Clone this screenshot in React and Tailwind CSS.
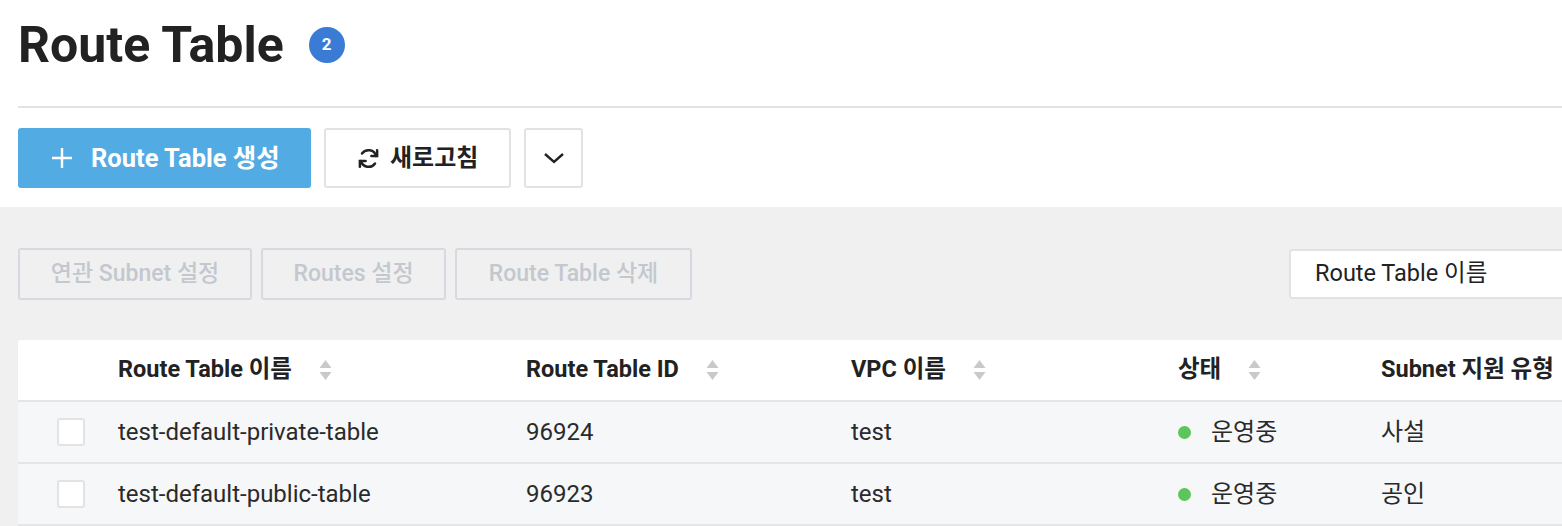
import React from "react";

const font = { fontFamily: "Roboto, 'Noto Sans CJK KR', sans-serif" };

const rows = [
  { id: 1, name: "test-default-private-table", tableId: "96924", vpc: "test", status: "운영중", type: "사설" },
  { id: 2, name: "test-default-public-table", tableId: "96923", vpc: "test", status: "운영중", type: "공인" },
];

const grid = "grid grid-cols-[100px_408px_325px_327px_203px_1fr]";

function SortIcon() {
  return (
    <svg width="13" height="22" viewBox="0 0 13 22" className="ml-[27px] shrink-0">
      <path d="M6.5 1 L12.5 9 H0.5 Z" fill="#c9c9c9" />
      <path d="M6.5 21 L12.5 13 H0.5 Z" fill="#c9c9c9" />
    </svg>
  );
}

function HeaderCell({ children, sort = true }) {
  return (
    <div className="flex items-center text-[23.5px] font-bold text-[#222]">
      <span>{children}</span>
      {sort && <SortIcon />}
    </div>
  );
}

export default function App() {
  return (
    <div className="h-[526px] w-[1562px] overflow-hidden bg-white" style={font}>
      {/* ================= HEADER ================= */}
      <div className="pl-[18px]">
        <div className="flex h-[90px] items-center">
          <h1 className="text-[50px] font-bold leading-none text-[#222]">
            Route Table
          </h1>
          <span className="ml-[25px] flex h-[36px] w-[36px] items-center justify-center rounded-full bg-[#3a7bd5] text-[17px] font-bold text-white">
            2
          </span>
        </div>
        <div className="mt-[16px] h-[2px] bg-[#e3e3e3]" />

        <div className="flex h-[99px] items-start gap-[13px] pt-[20px]">
          <button className="flex h-[60px] w-[293px] items-center rounded-[3px] bg-[#53abe4] pl-[33px] text-[25.5px] font-bold text-white">
            <svg width="22" height="22" viewBox="0 0 22 22" className="mr-[18px]">
              <path d="M11 1 V21 M1 11 H21" stroke="white" strokeWidth="2.4" />
            </svg>
            Route Table 생성
          </button>
          <button className="flex h-[60px] w-[187px] items-center rounded-[3px] border-2 border-[#e2e2e2] bg-white pl-[31px] text-[24px] font-bold text-[#222]">
            <svg width="23" height="23" viewBox="0 0 24 24" fill="none" stroke="#222" strokeWidth="2.6" strokeLinecap="round" className="mr-[10px]">
              <path d="M20 9.5A8.3 8.3 0 0 0 5.2 6.8" />
              <path d="M4 14.5a8.3 8.3 0 0 0 14.8 2.7" />
              <path d="M21 3.5v6h-6" />
              <path d="M3 20.5v-6h6" />
            </svg>
            새로고침
          </button>
          <button className="flex h-[60px] w-[59px] items-center justify-center rounded-[3px] border-2 border-[#e2e2e2] bg-white">
            <svg width="22" height="14" viewBox="0 0 22 14" fill="none">
              <path d="M2 3 L11 11 L20 3" stroke="#222" strokeWidth="2.4" />
            </svg>
          </button>
        </div>
      </div>

      {/* ================= CONTENT ================= */}
      <div className="h-[319px] bg-[#f0f0f0] pl-[18px] pt-[41px]">
        <div className="flex items-center">
          <div className="flex gap-[9px]">
            {["연관 Subnet 설정", "Routes 설정", "Route Table 삭제"].map((label, i) => (
              <button
                key={label}
                className={`flex h-[52px] items-center justify-center rounded-[3px] border-2 border-[#d6dae0] text-[23px] font-medium text-[#c3c8cf] ${
                  i === 0 ? "w-[234px]" : i === 1 ? "w-[185px]" : "w-[237px]"
                }`}
              >
                {label}
              </button>
            ))}
          </div>
          <div className="ml-auto flex h-[50px] w-[273px] items-center rounded-l-[3px] border-2 border-r-0 border-[#e2e2e2] bg-white pl-[24px] text-[23.5px] text-[#222]">
            Route Table 이름
          </div>
        </div>

        <div className="mt-[40px] rounded-tl-[3px] bg-white">
          <div className={`${grid} h-[62px] items-center border-b-2 border-[#e6e6e6]`}>
            <div />
            <HeaderCell>Route Table 이름</HeaderCell>
            <HeaderCell>Route Table ID</HeaderCell>
            <HeaderCell>VPC 이름</HeaderCell>
            <HeaderCell>상태</HeaderCell>
            <HeaderCell sort={false}>Subnet 지원 유형</HeaderCell>
          </div>
          {rows.map((row) => (
            <div
              key={row.id}
              className={`${grid} h-[62px] items-center border-b-2 border-[#e6e6e6] bg-[#f6f7f9] text-[24px] text-[#2a2a2a]`}
            >
              <div className="flex justify-center pl-[6px]">
                <span className="h-[28px] w-[28px] rounded-[3px] border-2 border-[#e3e3e3] bg-white" />
              </div>
              <div>{row.name}</div>
              <div>{row.tableId}</div>
              <div>{row.vpc}</div>
              <div className="flex items-center">
                <span className="mr-[20px] h-[13px] w-[13px] rounded-full bg-[#5cc65a]" />
                {row.status}
              </div>
              <div>{row.type}</div>
            </div>
          ))}
        </div>
      </div>
    </div>
  );
}
